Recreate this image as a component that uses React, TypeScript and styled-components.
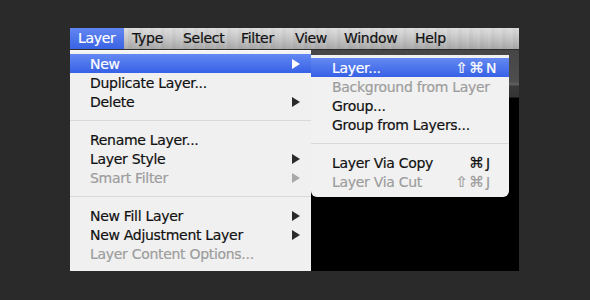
import styled, { createGlobalStyle } from 'styled-components'

const GlobalStyle = createGlobalStyle`
  body {
    margin: 0;
    background: #2a2a2a;
    font-family: "DejaVu Sans", "Liberation Sans", sans-serif;
  }
`

const Stage = styled.div`
  height: 300px;
  box-sizing: border-box;
  padding: 28px 0 0 70px;
`

const Window = styled.div`
  width: 449px;
  display: flex;
  flex-direction: column;
`

const MenuBar = styled.div`
  display: flex;
  height: 21px;
  border-bottom: 1px solid #2e2e2e;
  background:
    repeating-linear-gradient(90deg, rgba(255, 255, 255, 0.05) 0 3px, rgba(0, 0, 0, 0.025) 3px 7px, rgba(255, 255, 255, 0) 7px 11px),
    linear-gradient(#dcdcdc 0%, #cdcdcd 35%, #bfbfbf 60%, #a8a8a8 100%);
`

const BarItem = styled.div<{ $w?: number; $active?: boolean }>`
  ${p => (p.$w ? `width: ${p.$w}px;` : 'flex: 1;')}
  box-sizing: border-box;
  padding-left: 8px;
  font-size: 14px;
  line-height: 21px;
  letter-spacing: -0.3px;
  -webkit-text-stroke: 0.2px currentColor;
  color: ${p => (p.$active ? '#fff' : '#111')};
  background: ${p => (p.$active ? 'linear-gradient(#6286f1, #3a63e5)' : 'transparent')};
`

const Body = styled.div`
  display: flex;
  height: 221px;
`

const Menu = styled.div`
  width: 241px;
  box-sizing: border-box;
  padding: 4px 0 8px;
  background: linear-gradient(#f8f8f8 0, #f0f0f0 4px);
`

const Backdrop = styled.div`
  flex: 1;
  position: relative;
  background: linear-gradient(#464646 0, #4e4e4e 32px, #5c5c5c 33px, #5c5c5c 35px, #3a3a3a 36px, #343434 47px, #000 48px);
`

const Submenu = styled.div`
  position: absolute;
  left: 0;
  top: 5px;
  width: 198px;
  box-sizing: border-box;
  padding: 3px 0 6px;
  background: #f1f1f1;
  border-radius: 0 0 6px 6px;
`

const Row = styled.div<{ $hl?: boolean; $off?: boolean; $sub?: boolean }>`
  display: flex;
  align-items: center;
  height: 19px;
  padding: ${p => (p.$sub ? '0 9px 0 21px' : '0 11px 0 20px')};
  font-size: 14px;
  letter-spacing: -0.3px;
  -webkit-text-stroke: 0.2px currentColor;
  white-space: nowrap;
  color: ${p => (p.$hl ? '#fff' : p.$off ? '#9d9d9d' : '#111')};
  background: ${p => (p.$hl ? 'linear-gradient(#6489f2, #3761e6)' : 'transparent')};
`

const Label = styled.span`
  flex: 1;
`

const Arrow = styled.svg<{ $hl?: boolean; $off?: boolean }>`
  width: 8px;
  height: 10px;
  fill: ${p => (p.$hl ? '#fff' : p.$off ? '#a8a8a8' : '#2a2a2a')};
`

const Mods = styled.span`
  font-size: 15px;
  letter-spacing: 1px;
`

const Key = styled.span`
  width: 14px;
  padding-left: 1px;
`

const Separator = styled.div`
  height: 19px;
  display: flex;
  align-items: center;

  &::after {
    content: '';
    flex: 1;
    height: 1px;
    background: #d9d9d9;
  }
`

type Item = { label: string; sub?: boolean; off?: boolean; hl?: boolean; mods?: string; key?: string } | 'sep'

const barItems: [string, number?][] = [
  ['Layer', 54],
  ['Type', 51],
  ['Select', 58],
  ['Filter', 54],
  ['View', 49],
  ['Window', 71],
  ['Help'],
]

const layerMenu: Item[] = [
  { label: 'New', sub: true, hl: true },
  { label: 'Duplicate Layer...' },
  { label: 'Delete', sub: true },
  'sep',
  { label: 'Rename Layer...' },
  { label: 'Layer Style', sub: true },
  { label: 'Smart Filter', sub: true, off: true },
  'sep',
  { label: 'New Fill Layer', sub: true },
  { label: 'New Adjustment Layer', sub: true },
  { label: 'Layer Content Options...', off: true },
]

const newMenu: Item[] = [
  { label: 'Layer...', hl: true, mods: '⇧⌘', key: 'N' },
  { label: 'Background from Layer', off: true },
  { label: 'Group...' },
  { label: 'Group from Layers...' },
  'sep',
  { label: 'Layer Via Copy', mods: '⌘', key: 'J' },
  { label: 'Layer Via Cut', off: true, mods: '⇧⌘', key: 'J' },
]

function MenuRows({ items, inSub }: { items: Item[]; inSub?: boolean }) {
  return (
    <>
      {items.map((it, i) =>
        it === 'sep' ? (
          <Separator key={i} />
        ) : (
          <Row key={i} $hl={it.hl} $off={it.off} $sub={inSub}>
            <Label>{it.label}</Label>
            {it.sub && (
              <Arrow viewBox="0 0 8 10" $hl={it.hl} $off={it.off}>
                <polygon points="0,0 8,5 0,10" />
              </Arrow>
            )}
            {it.key && (
              <>
                <Mods>{it.mods}</Mods>
                <Key>{it.key}</Key>
              </>
            )}
          </Row>
        )
      )}
    </>
  )
}

export default function App() {
  return (
    <>
      <GlobalStyle />
      <Stage>
        <Window>
          <MenuBar>
            {barItems.map(([name, w], i) => (
              <BarItem key={name} $w={w} $active={i === 0}>
                {name}
              </BarItem>
            ))}
          </MenuBar>
          <Body>
            <Menu>
              <MenuRows items={layerMenu} />
            </Menu>
            <Backdrop>
              <Submenu>
                <MenuRows items={newMenu} inSub />
              </Submenu>
            </Backdrop>
          </Body>
        </Window>
      </Stage>
    </>
  )
}
